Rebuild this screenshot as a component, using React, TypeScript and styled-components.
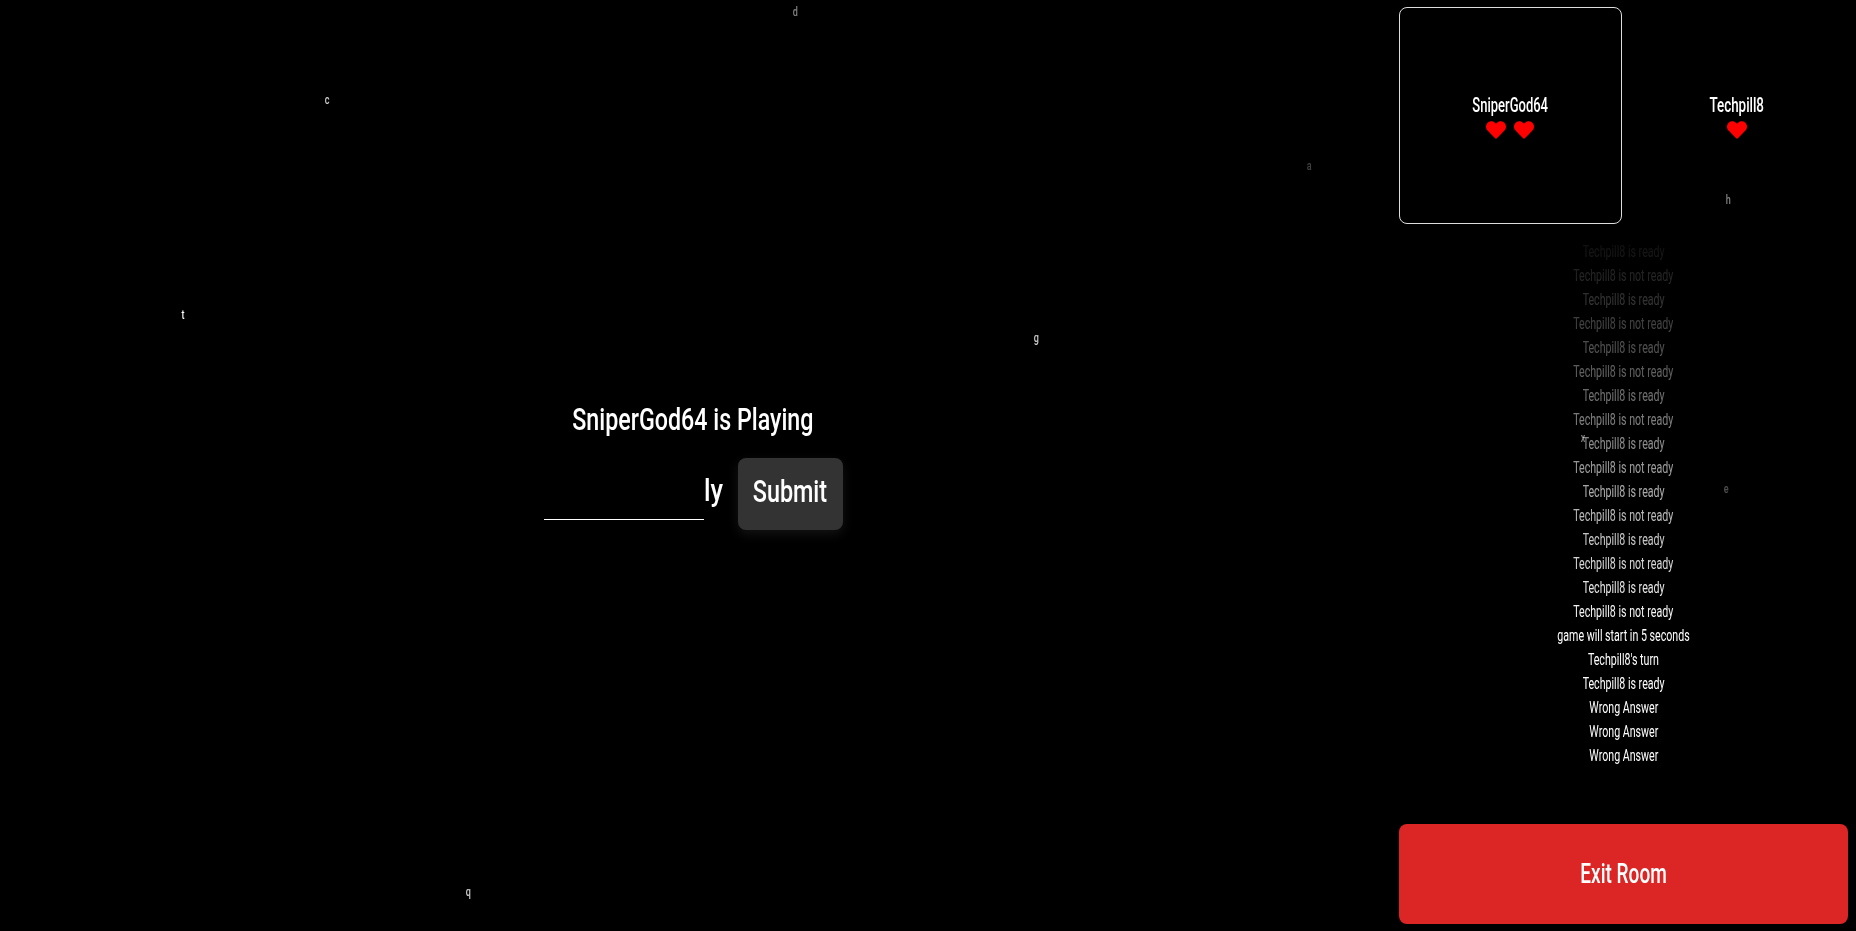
import React from "react";
import styled, { createGlobalStyle } from "styled-components";
import { FaHeart } from "react-icons/fa";

const Global = createGlobalStyle`
  html, body { margin: 0; padding: 0; height: 100%; background: #000; }
  #root { height: 100%; }
  * { box-sizing: border-box; }
`;

const FONT = `Roboto, "Liberation Sans", sans-serif`;

const Page = styled.div`
  position: relative;
  display: flex;
  height: 931px;
  overflow: hidden;
  background: #000;
  color: #fff;
  font-family: ${FONT};
`;

const Main = styled.main`
  flex: 1;
  display: flex;
  flex-direction: column;
  align-items: center;
  justify-content: center;
  padding-right: 13px;
`;

const Narrow = styled.span<{ $ratio: number }>`
  display: inline-block;
  white-space: nowrap;
  transform: scaleX(${(p) => p.$ratio});
`;

const Title = styled.h1`
  margin: 1px 0 20px;
  font-size: 31px;
  line-height: 36px;
  font-weight: 500;
  white-space: nowrap;
`;

const Form = styled.form`
  display: flex;
  align-items: center;
`;

const Answer = styled.div`
  display: flex;
  align-items: flex-end;
  height: 72px;
  font-size: 32px;
  font-weight: 500;
  line-height: 40px;
  padding-bottom: 20px;
`;

const Blank = styled.div`
  width: 160px;
  height: 1px;
  margin-bottom: -10px;
  background: #fff;
`;

const Suffix = styled.span`
  display: block;
  width: 18px;
  margin-right: 16px;
  white-space: nowrap;
  transform: scaleX(0.8);
  transform-origin: left center;
`;

const Submit = styled.button`
  width: 105px;
  height: 72px;
  padding: 0 0 7px;
  border: 0;
  border-radius: 8px;
  background: #333;
  color: #fff;
  font: 500 32px ${FONT};
  box-shadow: 0 4px 12px rgba(255, 255, 255, 0.08);
`;

const Side = styled.aside`
  width: 457px;
  display: flex;
  flex-direction: column;
  padding: 7px 8px 7px 0;
`;

const Players = styled.div`
  display: grid;
  grid-template-columns: 223px 223px;
  gap: 3px;
  height: 217px;
`;

const PlayerCard = styled.div<{ $active?: boolean }>`
  display: flex;
  flex-direction: column;
  align-items: center;
  justify-content: center;
  padding-top: 2px;
  border: 1px solid ${(p) => (p.$active ? "#ddd" : "transparent")};
  border-radius: 8px;
`;

const PlayerName = styled.div`
  font-size: 20px;
  font-weight: 500;
  line-height: 24px;
`;

const Hearts = styled.div<{ $nudge?: number }>`
  display: flex;
  gap: 8px;
  height: 20px;
  margin-top: 3px;
  margin-left: ${(p) => p.$nudge ?? 0}px;
  color: #f00;
`;

const Log = styled.div`
  margin-top: 16px;
  display: flex;
  flex-direction: column;
  align-items: center;
  font-size: 16px;
  line-height: 24px;
  -webkit-mask-image: linear-gradient(to bottom, rgba(0,0,0,0.05) 0, #000 390px);
  mask-image: linear-gradient(to bottom, rgba(0,0,0,0.05) 0, #000 390px);
`;

const Exit = styled.button`
  margin-top: auto;
  height: 100px;
  padding: 0 0 2px;
  border: 0;
  border-radius: 8px;
  background: #dc2626;
  color: #fff;
  font: 500 28px ${FONT};
`;

const FloatingLetter = styled.span<{ $x: number; $y: number; $o: number }>`
  position: absolute;
  left: ${(p) => p.$x}px;
  top: ${(p) => p.$y}px;
  opacity: ${(p) => p.$o};
  font-size: 12px;
  font-weight: 500;
  line-height: 12px;
  transform: scaleX(0.75);
  pointer-events: none;
`;

const letters = [
  { c: "d", x: 792, y: 6, o: 0.5 },
  { c: "c", x: 324, y: 94, o: 0.8 },
  { c: "a", x: 1306, y: 160, o: 0.25 },
  { c: "h", x: 1725, y: 194, o: 0.5 },
  { c: "t", x: 181, y: 309, o: 1 },
  { c: "g", x: 1033, y: 332, o: 0.8 },
  { c: "x", x: 1580, y: 432, o: 0.5 },
  { c: "e", x: 1723, y: 483, o: 0.3 },
  { c: "q", x: 465, y: 886, o: 0.8 },
];

const lines = [
  ...Array.from({ length: 16 }, (_, i) => `Techpill8 is ${i % 2 ? "not " : ""}ready`),
  "game will start in 5 seconds",
  "Techpill8's turn",
  "Techpill8 is ready",
  "Wrong Answer",
  "Wrong Answer",
  "Wrong Answer",
];

export default function App() {
  return (
    <Page>
      <Global />
      <Main>
        <Title><Narrow $ratio={0.75}>SniperGod64 is Playing</Narrow></Title>
        <Form>
          <Answer>
            <Blank />
            <Suffix>ly</Suffix>
          </Answer>
          <Submit type="button"><Narrow $ratio={0.73}>Submit</Narrow></Submit>
        </Form>
      </Main>
      <Side>
        <Players>
          <PlayerCard $active>
            <PlayerName><Narrow $ratio={0.65}>SniperGod64</Narrow></PlayerName>
            <Hearts $nudge={-1}><FaHeart size={20} /><FaHeart size={20} /></Hearts>
          </PlayerCard>
          <PlayerCard>
            <PlayerName><Narrow $ratio={0.67}>Techpill8</Narrow></PlayerName>
            <Hearts><FaHeart size={20} /></Hearts>
          </PlayerCard>
        </Players>
        <Log>
          {lines.map((l, i) => <div key={i}><Narrow $ratio={0.665}>{l}</Narrow></div>)}
        </Log>
        <Exit type="button"><Narrow $ratio={0.68}>Exit Room</Narrow></Exit>
      </Side>
      {letters.map((l) => (
        <FloatingLetter key={l.c} $x={l.x} $y={l.y} $o={l.o}>{l.c}</FloatingLetter>
      ))}
    </Page>
  );
}
